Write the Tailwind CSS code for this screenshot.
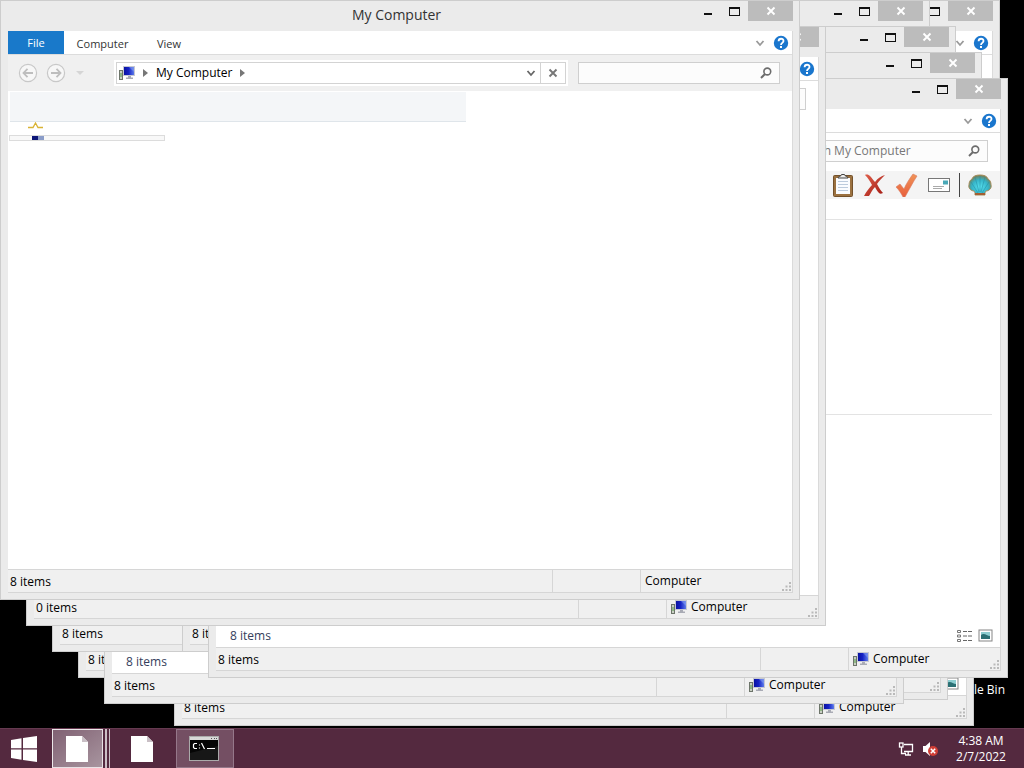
<!DOCTYPE html>
<html lang="en">
<head>
  <meta charset="UTF-8" />
  <meta name="viewport" content="width=device-width, initial-scale=1.0" />
  <title>My Computer</title>
  <script src="https://cdn.jsdelivr.net/npm/@tailwindcss/browser@4"></script>
</head>
<body class="h-screen flex flex-col overflow-hidden bg-black text-black text-[12px] leading-4 font-['Open_Sans','Noto_Sans',sans-serif]">

  <!-- Icon set -->
  <svg class="absolute size-0" aria-hidden="true">
    <defs>
      <linearGradient id="screenFill" x1="0" y1="0" x2="1" y2="0">
        <stop offset="0" stop-color="#0a12a0" /><stop offset=".45" stop-color="#1522c4" /><stop offset="1" stop-color="#5d7bea" />
      </linearGradient>
      <radialGradient id="shellFill" cx=".5" cy=".6" r=".6">
        <stop offset="0" stop-color="#57e0ee" /><stop offset=".6" stop-color="#35b4c8" /><stop offset="1" stop-color="#7a7a50" />
      </radialGradient>
      <linearGradient id="redFill" x1="0" y1="0" x2="1" y2="1">
        <stop offset="0" stop-color="#e0604c" /><stop offset="1" stop-color="#a01710" />
      </linearGradient>
      <linearGradient id="orangeFill" x1="0" y1="0" x2="0" y2="1">
        <stop offset="0" stop-color="#f09458" /><stop offset="1" stop-color="#e85f3c" />
      </linearGradient>
    </defs>
    <symbol id="computer" viewBox="0 0 16 16">
      <rect x=".5" y="5.500" width="3" height="9" fill="#c9cfc4" stroke="#6d756a" />
      <rect x="1.500" y="8" width="1" height="4" fill="#55a046" />
      <rect x="4" y="1" width="12" height="10" fill="#c6c8d2" />
      <rect x="5" y="2" width="10" height="8" fill="url(#screenFill)" />
      <path d="M10 2h5v5z" fill="#8fa9f5" opacity=".5" />
      <path d="M9 11h3v1.500h2V14H7v-1.500h2z" fill="#a9abb5" />
    </symbol>
    <symbol id="help" viewBox="0 0 16 16">
      <circle cx="8" cy="8" r="7.200" fill="#1a76cd" />
      <path d="M5.600 6.200C5.600 2.900 10.600 3 10.500 6c0 1.800-2.500 1.900-2.500 3.900" fill="none" stroke="#fff" stroke-width="1.800" />
      <rect x="7" y="11" width="2" height="2" fill="#fff" />
    </symbol>
    <symbol id="chevron" viewBox="0 0 10 10">
      <path d="M1.500 3 5 7l3.500-4" fill="none" stroke="currentColor" stroke-width="1.800" />
    </symbol>
    <symbol id="glass" viewBox="0 0 12 12">
      <circle cx="7.300" cy="4.500" r="3.400" fill="none" stroke="#6c6c6c" stroke-width="1.600" />
      <path d="M5 7 1 11" stroke="#6c6c6c" stroke-width="2" />
    </symbol>
    <symbol id="arrow" viewBox="0 0 20 20">
      <circle cx="10" cy="10" r="8.600" fill="#f7f7f7" stroke="#c8c8c8" stroke-width="1.200" />
      <path d="M15 10H5.500M9.500 5.800 5.500 10l4 4.200" fill="none" stroke="#bebebe" stroke-width="1.800" />
    </symbol>
    <symbol id="cross" viewBox="0 0 10 10">
      <path d="m1.500 1.500 7 7m0-7-7 7" fill="none" stroke="currentColor" stroke-width="1.900" />
    </symbol>
    <symbol id="grip" viewBox="0 0 10 10">
      <path d="M7 0h2v2H7zM7 3.500h2v2H7zM3.500 3.500h2v2h-2zM7 7h2v2H7zM3.500 7h2v2h-2zM0 7h2v2H0z" fill="#b9b9b9" />
    </symbol>
    <symbol id="thumbs" viewBox="0 0 16 14">
      <rect x="1" y="1" width="13" height="11" fill="#fff" stroke="#858585" />
      <rect x="3" y="3" width="9" height="7" fill="#8ccdd0" />
      <path d="M3 6c3-3 6 1 9 1v3H3z" fill="#2b7074" />
    </symbol>
    <symbol id="list" viewBox="0 0 16 14">
      <path d="M1.500 1.500h3v2h-3zM1.500 6h3v2h-3zM1.500 10.500h3v2h-3z" fill="#fff" stroke="#777" />
      <path d="M7 2.500h4M12 2.500h4M7 7h4M12 7h4M7 11.500h4M12 11.500h4" stroke="#666" />
    </symbol>
    <symbol id="page" viewBox="0 0 22 28">
      <path d="M0 1h16l6 6v20H0z" fill="#fff" />
      <path d="M16 1v6h6z" fill="#c9bfc5" />
    </symbol>
  </svg>

  <!-- Desktop -->
  <main class="relative flex-1 overflow-hidden">
    <a href="#" class="absolute right-[19px] bottom-[30px] text-white">Recycle Bin</a>
    <div id="desktop"></div>
  </main>

  <!-- Taskbar -->
  <footer class="flex h-10 items-stretch border-t border-[#653a50] bg-[#54293f] text-white">
    <button aria-label="Start" class="w-[52px] flex items-center pl-[11px]">
      <svg class="size-[26px]" viewBox="0 0 26 26" fill="#fff"><path d="M0 4 10.500 2.200v10H0zM12 2l14-2v12.200H12zM0 13.500h10.500v10.200L0 22zM12 13.500h14V26l-14-2z" /></svg>
    </button>
    <button aria-label="My Computer windows" class="w-[58px] flex">
      <span class="flex w-[51px] h-full items-center justify-center border border-white/80 bg-linear-to-br from-[#806173] to-[#a8959f] pr-0.5"><svg class="w-[22px] h-7"><use href="#page" /></svg></span>
      <span class="w-1 h-full border-r-2 border-white/70"></span>
      <span class="w-[3px] h-full border-r border-white/70"></span>
    </button>
    <button aria-label="Document" class="w-[66px] flex items-center justify-center pr-0.5"><svg class="w-[22px] h-7"><use href="#page" /></svg></button>
    <button aria-label="Command Prompt" class="w-[58px] flex items-center justify-center border border-[#95788a] bg-[#744f63] pr-0.5">
      <svg class="w-[30px] h-[26px]" viewBox="0 0 30 26">
        <rect x=".5" y=".5" width="29" height="24" fill="#050505" stroke="#aaa" />
        <rect x="1" y="1" width="28" height="3" fill="#d8d8d8" />
        <path d="M22 2.500h1m2 0h1m1 0h1" stroke="#555" />
        <path d="M1 17 29 10v14H1z" fill="#292929" opacity=".5" />
        <path d="M8 7.500H5.500L4.500 8.500v3l1 1H8M10.500 8.500v1m0 2v1M12.500 7l3 6M18 12.500h8" fill="none" stroke="#fff" stroke-width="1.200" />
      </svg>
    </button>
    <div class="ml-auto flex items-center">
      <button aria-label="Network" class="mr-2">
        <svg class="size-4" viewBox="0 0 16 16" fill="none" stroke="#fff" stroke-width="1.300"><path d="M6 3.500h8.500v7H6M10.200 10.500v3M7 14h6M3.500 6v6.500H8" /><rect x="1.500" y="2" width="3.500" height="4" /></svg>
      </button>
      <button aria-label="Volume muted" class="mr-2">
        <svg class="size-4" viewBox="0 0 16 16"><path d="M1 5h2.500L8 1v14l-4.500-4H1z" fill="#fff" /><circle cx="11" cy="10" r="5" fill="#cf3d35" /><path d="m8.800 7.800 4.400 4.400m0-4.400-4.400 4.400" stroke="#fff" stroke-width="1.500" /></svg>
      </button>
      <button class="w-[70px] mr-2 text-center leading-4">4:38 AM<br>2/7/2022</button>
    </div>
  </footer>

  <script>
    const desktop = document.getElementById("desktop");

    // back to front
    const windows = [
      { x: 200, y: 0, body: "list" },
      { x: 174, y: 126, body: "list" },
      { x: 148, y: 100, body: "list" },
      { x: 130, y: 0, body: "list" },
      { x: 156, y: 26, body: "list" },
      { x: 78, y: 78, body: "list" },
      { x: 104, y: 104, body: "list" },
      { x: 52, y: 52, body: "list" },
      { x: 182, y: 52, body: "list" },
      { x: 208, y: 78, body: "list" },
      { x: 26, y: 26, body: "empty", count: 0 },
      { x: 0, y: 0, body: "loading", active: true }
    ];

    const toolbar = `
      <div class="mt-0.5 flex h-7 items-center justify-end gap-2 bg-[#f4f4f4] pr-2">
        <button aria-label="Paste"><svg class="size-6" viewBox="0 0 24 24"><rect x="2.500" y="2.500" width="19" height="21" rx="1" fill="#9b7140" stroke="#73512b" /><path d="M5 5h14v16H5z" fill="#fafcff" /><path d="M7 8.500h10M7 11.500h10M7 14.500h10M7 17.500h10" stroke="#bccbdd" /><path d="M7 5c0-2 3-1 3.500-3.500h3C14 4 17 3 17 5z" fill="#eee" stroke="#444" /></svg></button>
        <button aria-label="Delete"><svg class="size-6" viewBox="0 0 24 24"><path d="M2 2c2-1 4 0 5 1 2 2 3 4 5 6 3-4 6-6 10-7-3 3-6 6-8 9 2 4 4 7 6 9-2 1-3 1-4 0-2-2-3-4-4-6-3 3-4 6-6 9H1c2-4 5-8 8-11C7 8 5 5 2 2z" fill="url(#redFill)" /></svg></button>
        <button aria-label="Properties"><svg class="size-6" viewBox="0 0 24 24"><path d="m1 14 4-3 4 5c2-5 6-11 9-15l4 2C18 9 14 17 10 24H8c-2-4-4-7-7-10z" fill="url(#orangeFill)" stroke="#d97b62" stroke-width=".6" /></svg></button>
        <button aria-label="Mail"><svg class="size-6" viewBox="0 0 24 24"><rect x="1.500" y="5.500" width="21" height="13" fill="#fff" stroke="#777" /><rect x="16" y="7.500" width="5" height="4" fill="#4aa9b8" /><path d="M6 13.500h11M6 15.500h9" stroke="#aaa" /></svg></button>
        <span class="h-6 w-px bg-[#444]"></span>
        <button aria-label="Shell"><svg class="size-6" viewBox="0 0 24 24"><path d="M7 22c0-2 0-3-1-4-3 0-6-3-5-6 0-3 1-5 3-6 1-3 4-4 8-4s7 1 8 4c2 1 3 3 3 6 1 3-2 6-5 6-1 1-1 2-1 4z" fill="url(#shellFill)" stroke="#a58c5b" /><path d="M10 20 3 9m8 10L7 4m5 15V3m1 16 4-15m-3 16 7-11" stroke="#248ba0" stroke-width=".5" /><path d="M7 20h10v2H7z" fill="#a35f32" /></svg></button>
      </div>`;

    const bodies = {
      list: `${toolbar}
        <div class="mr-2 mt-5 h-[195px] border-t border-[#e3e3e3]"></div>
        <div class="mr-2 flex-1 border-t border-[#e3e3e3]"></div>
        <div class="flex h-[22px] items-center justify-between pl-[14px] pr-1.5 text-[#343e5c]">
          <span>8 items</span>
          <span class="flex gap-1.5">
            <button aria-label="Details view"><svg class="w-4 h-3.5"><use href="#list" /></svg></button>
            <button aria-label="Icon view"><svg class="w-4 h-3.5"><use href="#thumbs" /></svg></button>
          </span>
        </div>`,
      empty: ``,
      loading: `
        <div class="ml-0.5 mt-px h-[30px] w-[456px] border-b border-[#dfe5ea] bg-[#f4f6f8]"></div>
        <svg class="ml-5 w-4 h-[7px]" viewBox="0 0 16 7"><path d="M0 5.500h5L7.500 1 10 5.500h5" fill="none" stroke="#d9b335" stroke-width="1.300" /></svg>
        <div class="ml-px mt-1.5 h-1.5 w-[156px] overflow-hidden border border-[#dcdcdc] bg-[#f8f8f8] pl-[22px]">
          <svg class="w-3 h-1"><rect width="6" height="4" fill="#0d1678" /><rect x="6" width="6" height="4" fill="#8a9cc8" /></svg>
        </div>`
    };

    function renderWindow(win, index) {
      const el = document.createElement("section");
      el.className = "absolute flex h-[600px] w-[800px] flex-col border border-[#cdcdcd] bg-[#ebebeb] pb-1.5 pl-[7px] pr-1.5";
      el.style.left = win.x + "px";
      el.style.top = win.y + "px";

      el.innerHTML = `
        <header class="grid h-[30px] grid-cols-[1fr_auto_1fr]">
          <h2 class="col-start-2 pr-2 pt-1 text-[14px] leading-5 text-[#333]">${win.active ? "My Computer" : ""}</h2>
          <div class="col-start-3 flex items-start justify-end">
            <button aria-label="Minimize" class="h-5 w-[27px] flex justify-center pt-3"><span class="h-0.5 w-2 bg-[#111]"></span></button>
            <button aria-label="Maximize" class="h-5 w-[27px] flex justify-center pt-1.5"><span class="h-[9px] w-[11px] border border-t-2 border-[#111]"></span></button>
            <button aria-label="Close" class="h-5 w-[45px] flex items-center justify-center bg-[#bcbcbc] text-white"><svg class="size-2.5"><use href="#cross" /></svg></button>
          </div>
        </header>
        <div class="flex min-h-0 flex-1 flex-col border-r border-[#dadada] bg-white">
          <nav class="flex h-6 shrink-0 items-stretch border-b border-[#dcdcdc] pr-[3px] text-[11px] text-[#333]">
            <button class="w-14 bg-[#1979ca] text-white">File</button>
            <button class="w-[77px] pt-0.5">Computer</button>
            <button class="w-14 pt-0.5">View</button>
            <button aria-label="Expand ribbon" class="ml-auto mr-2 text-[#999]"><svg class="size-2.5"><use href="#chevron" /></svg></button>
            <button aria-label="Help"><svg class="size-4"><use href="#help" /></svg></button>
          </nav>
          <div class="flex h-9 shrink-0 items-center pl-2.5 pr-3 ${win.active ? "bg-[#f0f0f0]" : "bg-white"}">
            <button aria-label="Back" class="mr-2"><svg class="size-5"><use href="#arrow" /></svg></button>
            <button aria-label="Forward" class="mr-2"><svg class="size-5 rotate-180"><use href="#arrow" /></svg></button>
            <button aria-label="Recent" class="mr-[30px]"><svg class="h-2 w-3" viewBox="0 0 12 8"><path d="M2 2h8L6 6z" fill="#d5d5d5" /></svg></button>
            <div class="flex h-[22px] flex-1 items-center border border-[#d3d3d3] bg-white pl-0.5 outline-2 outline-white">
              <svg class="mr-2 size-4"><use href="#computer" /></svg>
              <svg class="mr-2 h-2 w-[5px]" viewBox="0 0 5 8"><path d="M0 0v8l5-4z" fill="#777" /></svg>
              <a href="#" class="mr-2">My Computer</a>
              <svg class="h-2 w-[5px]" viewBox="0 0 5 8"><path d="M0 0v8l5-4z" fill="#777" /></svg>
              <button aria-label="History" class="ml-auto mr-1 text-[#666]"><svg class="size-2.5"><use href="#chevron" /></svg></button>
              <button aria-label="Stop" class="flex h-full w-[25px] items-center justify-center border-l border-[#d3d3d3] text-[#777]"><svg class="size-2.5"><use href="#cross" /></svg></button>
            </div>
            <label for="search${index}" class="ml-3 flex h-[22px] w-[202px] items-center border border-[#cfcfcf] bg-[#fcfcfc] px-1.5">
              <input id="search${index}" aria-label="Search" placeholder="${win.active ? "" : "Search My Computer"}" class="min-w-0 flex-1 outline-none placeholder:text-[#777]" />
              <svg class="mr-px size-3"><use href="#glass" /></svg>
            </label>
          </div>
          ${bodies[win.body]}
        </div>
        <div class="flex h-6 shrink-0 items-stretch border border-l-0 border-[#d6d6d6] bg-[#f0f0f0] leading-6">
          <span class="flex-1 border-r border-[#d6d6d6] pl-0.5">${win.count ?? 8} items</span>
          <span class="w-[88px] border-r border-[#d6d6d6]"></span>
          <span class="flex w-[151px] items-center gap-1 pl-1">
            ${win.active ? "" : `<svg class="size-4"><use href="#computer" /></svg>`}
            Computer
            <svg class="ml-auto size-2.5 self-end"><use href="#grip" /></svg>
          </span>
        </div>
      `;
      desktop.appendChild(el);
    }

    windows.forEach(renderWindow);
  </script>
</body>
</html>
